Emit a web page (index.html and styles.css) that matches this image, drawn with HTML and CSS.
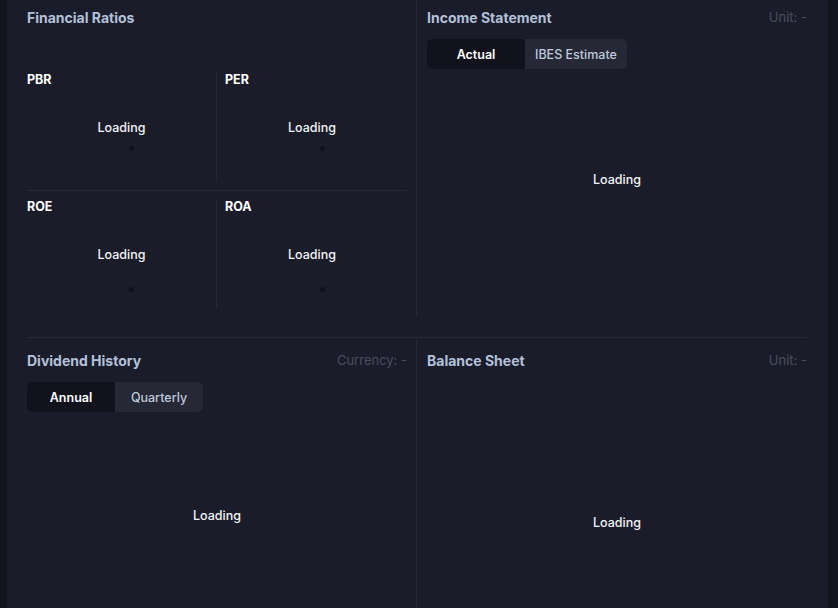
FILE: index.html
```html
<!DOCTYPE html>
<html lang="en">
<head>
    <meta charset="UTF-8">
    <meta name="viewport" content="width=device-width, initial-scale=1.0">
    <title>Fundamentals</title>
    <link rel="stylesheet" href="styles.css">
</head>
<body>
    <div class="page">
        <div class="row row-top">
            <section class="panel">
                <div class="panel-head">
                    <h2>Financial Ratios</h2>
                </div>
                <div class="ratios">
                    <div class="ratio-row">
                        <div class="ratio ratio-left">
                            <div class="ratio-label">PBR</div>
                            <div class="ratio-body"><span class="loading">Loading</span><span class="dot"></span></div>
                        </div>
                        <div class="ratio ratio-right">
                            <div class="ratio-label">PER</div>
                            <div class="ratio-body"><span class="loading">Loading</span><span class="dot"></span></div>
                        </div>
                    </div>
                    <div class="ratio-row">
                        <div class="ratio ratio-left">
                            <div class="ratio-label">ROE</div>
                            <div class="ratio-body"><span class="loading">Loading</span><span class="dot"></span></div>
                        </div>
                        <div class="ratio ratio-right">
                            <div class="ratio-label">ROA</div>
                            <div class="ratio-body"><span class="loading">Loading</span><span class="dot"></span></div>
                        </div>
                    </div>
                </div>
            </section>
            <div class="vline"></div>
            <section class="panel">
                <div class="panel-head">
                    <h2>Income Statement</h2>
                    <span class="meta">Unit: -</span>
                </div>
                <div class="seg seg-income">
                    <button class="active">Actual</button>
                    <button>IBES Estimate</button>
                </div>
                <div class="chart chart-income"><span class="loading">Loading</span></div>
            </section>
        </div>

        <div class="hline"></div>

        <div class="row row-bottom">
            <section class="panel">
                <div class="panel-head">
                    <h2>Dividend History</h2>
                    <span class="meta">Currency: -</span>
                </div>
                <div class="seg">
                    <button class="active">Annual</button>
                    <button>Quarterly</button>
                </div>
                <div class="chart chart-dividend"><span class="loading">Loading</span></div>
            </section>
            <div class="vline vline-bottom"></div>
            <section class="panel">
                <div class="panel-head">
                    <h2>Balance Sheet</h2>
                    <span class="meta">Unit: -</span>
                </div>
                <div class="chart chart-balance"><span class="loading">Loading</span></div>
            </section>
        </div>
    </div>
</body>
</html>
```

FILE: styles.css
```css
html, body {
    margin: 0;
    height: 608px;
    overflow: hidden;
    background-color: #13141e;
    font-family: 'Inter', 'Liberation Sans', sans-serif;
    color: #f2f3f7;
}
.page {
    margin-left: 7px;
    width: 780px;
    height: 608px;
    padding: 0 21px 0 20px;
    background-color: #1b1c29;
}
.row {
    display: flex;
}
.row-top {
    height: 316px;
}
.row-bottom {
    height: 270px;
}
.panel {
    flex: 1;
    min-width: 0;
    padding-top: 7px;
}
.row-bottom .panel {
    padding-top: 12px;
}
.vline {
    width: 1px;
    margin: 0 10px 0 9px;
    background-color: #262835;
}
.vline-bottom {
    margin-top: 2px;
}
.hline {
    height: 1px;
    margin-top: 21px;
    background-color: #262835;
}
.panel-head {
    display: flex;
    justify-content: space-between;
    align-items: center;
    height: 20px;
}
h2 {
    margin: 0;
    font-size: 14px;
    font-weight: 700;
    color: #b2c1d9;
}
.meta {
    font-size: 13px;
    color: #4a4d5e;
}
.ratios {
    margin-top: 45px;
}
.ratio-row {
    display: grid;
    grid-template-columns: 1fr 1fr;
    padding-bottom: 8px;
}
.ratio-row:first-child {
    border-bottom: 1px solid #262835;
}
.ratio-row + .ratio-row {
    padding-top: 8px;
}
.ratio-row + .ratio-row .dot {
    margin-top: 24px;
}
.ratio {
    height: 110px;
}
.ratio-left {
    border-right: 1px solid #262835;
}
.ratio-right .ratio-label {
    padding-left: 8px;
}
.ratio-label {
    font-size: 12.5px;
    font-weight: 700;
    line-height: 16px;
    color: #ffffff;
}
.ratio-body {
    display: flex;
    flex-direction: column;
    align-items: center;
    padding-top: 32px;
}
.loading {
    font-size: 12.5px;
    font-weight: 500;
    line-height: 16px;
    color: #f2f3f7;
}
.dot {
    width: 5px;
    height: 5px;
    margin: 10px 0 0 20px;
    border-radius: 50%;
    background-color: #10111a;
}
.seg {
    display: inline-flex;
    margin-top: 12px;
    background-color: #262835;
    border-radius: 5px;
    overflow: hidden;
}
.seg button {
    height: 30px;
    min-width: 88px;
    padding: 0 10px;
    border: none;
    background: transparent;
    font-family: inherit;
    font-size: 12.5px;
    font-weight: 500;
    color: #bfc8db;
}
.seg button.active {
    background-color: #11121c;
    color: #ffffff;
    font-weight: 600;
}
.seg-income button.active {
    min-width: 98px;
}
.chart {
    display: flex;
    justify-content: center;
    align-items: flex-start;
    box-sizing: border-box;
}
.chart-income {
    height: 196px;
    margin-top: 12px;
    padding-top: 91px;
}
.chart-dividend {
    height: 182px;
    margin-top: 12px;
    padding-top: 84px;
}
.chart-balance {
    height: 236px;
    padding-top: 145px;
}
```
